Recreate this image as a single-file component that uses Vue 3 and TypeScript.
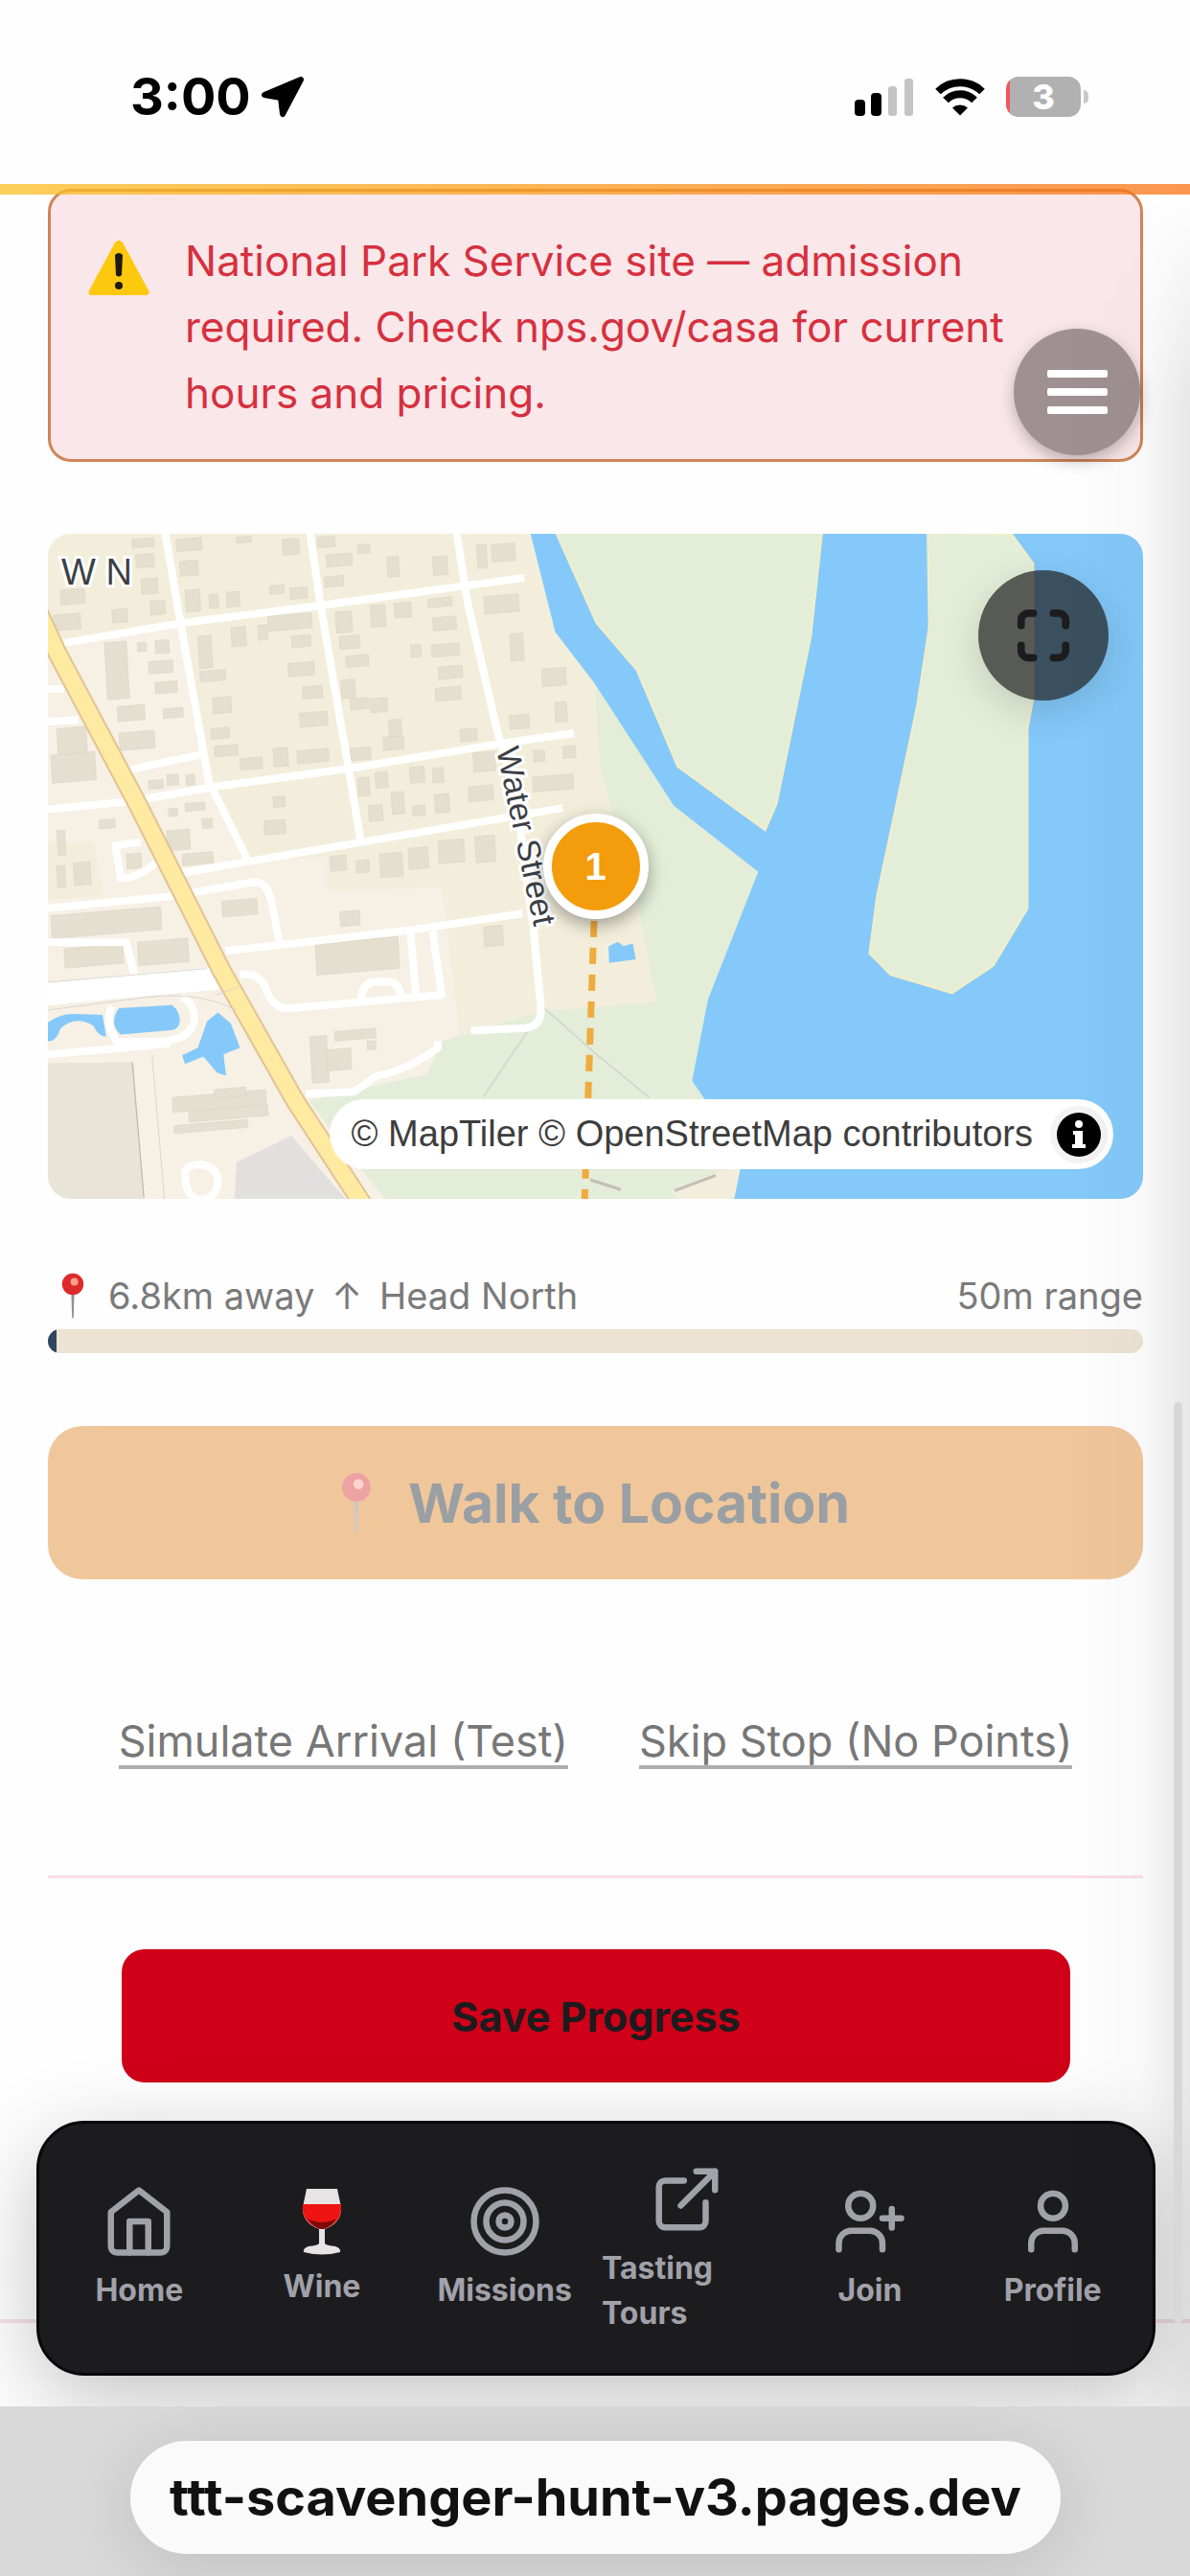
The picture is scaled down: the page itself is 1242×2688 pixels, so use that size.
<script setup lang="ts">
type Box = [x: number, y: number, w: number, h: number]

interface NavItem {
  label: string
  icon: 'home' | 'wine' | 'target' | 'external' | 'join' | 'user'
}

const navItems: NavItem[] = [
  { label: 'Home', icon: 'home' },
  { label: 'Wine', icon: 'wine' },
  { label: 'Missions', icon: 'target' },
  { label: 'Tasting Tours', icon: 'external' },
  { label: 'Join', icon: 'join' },
  { label: 'Profile', icon: 'user' },
]

const progressPercent = 0.8

// Building footprints of the old town, west of the river.
const buildings: Box[] = [
  [255, 50, 60, 20], [265, 85, 50, 30], [280, 140, 45, 35], [305, 190, 40, 32],
  [375, 50, 70, 28], [385, 100, 50, 34], [400, 165, 40, 50], [465, 175, 25, 32], [512, 170, 36, 34],
  [540, 45, 40, 14], [665, 50, 45, 36], [630, 155, 40, 20], [685, 160, 48, 26],
  [760, 45, 48, 24], [785, 85, 70, 28], [780, 135, 52, 24], [870, 62, 34, 20], [950, 90, 32, 46],
  [1075, 90, 40, 42], [1195, 62, 26, 54], [1235, 62, 64, 40],
  [60, 165, 66, 34], [40, 222, 74, 36], [200, 210, 42, 30], [180, 285, 60, 130],
  [270, 285, 24, 20], [318, 280, 38, 30], [300, 328, 66, 28], [318, 375, 60, 26], [340, 435, 54, 22],
  [215, 430, 74, 34], [220, 490, 96, 40], [50, 480, 80, 60], [34, 540, 120, 64],
  [435, 270, 36, 74], [440, 350, 70, 24], [475, 410, 50, 36], [470, 480, 50, 24], [480, 520, 64, 24], [550, 548, 60, 26],
  [525, 250, 40, 44], [598, 245, 26, 34], [625, 225, 120, 34], [690, 270, 52, 26], [680, 332, 72, 30],
  [720, 385, 54, 28], [712, 445, 76, 32], [640, 525, 40, 42], [705, 530, 86, 30],
  [810, 215, 44, 48], [820, 270, 56, 30], [838, 315, 62, 26], [825, 370, 38, 42], [850, 412, 50, 26], [905, 412, 46, 32],
  [905, 200, 40, 50], [970, 195, 46, 34], [955, 460, 34, 40], [940, 500, 56, 30], [850, 525, 56, 28],
  [1015, 290, 28, 28], [1062, 185, 66, 20], [1075, 228, 64, 30], [1072, 290, 76, 28], [1090, 340, 66, 28], [1082, 388, 70, 30],
  [1215, 180, 94, 40], [1285, 265, 36, 62], [1372, 345, 66, 40], [1408, 420, 32, 46], [1284, 450, 54, 32],
  [1150, 482, 46, 28], [1185, 535, 60, 44], [1172, 612, 68, 34], [1350, 530, 30, 26], [1430, 520, 34, 28], [1348, 590, 110, 34],
  [870, 592, 32, 42], [918, 580, 34, 36], [962, 625, 34, 50], [1012, 568, 40, 36], [1074, 570, 30, 34],
  [900, 655, 38, 36], [1020, 655, 34, 24], [1080, 630, 40, 42],
  [640, 635, 32, 24], [615, 690, 58, 32], [795, 770, 44, 34], [866, 780, 36, 28], [930, 765, 62, 54],
  [1008, 752, 54, 48], [1090, 735, 70, 52], [1190, 725, 54, 60], [1214, 930, 52, 46], [822, 896, 54, 34],
  [500, 872, 96, 36], [755, 968, 226, 72], [350, 585, 32, 24], [402, 585, 24, 24], [300, 598, 40, 20],
  [350, 712, 62, 46], [392, 765, 84, 26], [355, 662, 24, 18], [400, 650, 54, 18], [446, 685, 28, 22],
  [165, 688, 44, 20], [50, 712, 22, 56], [50, 792, 22, 50], [95, 785, 46, 52], [240, 765, 40, 34],
  [34, 905, 300, 52], [70, 980, 160, 44], [270, 965, 138, 54],
  [740, 1180, 46, 106], [786, 1210, 66, 48], [808, 1168, 112, 22], [896, 1190, 24, 20],
  [365, 1318, 256, 34], [410, 1350, 216, 24], [370, 1382, 200, 18], [480, 1300, 86, 20],
]
</script>

<template>
  <div class="page">
    <header class="status-bar">
      <div class="clock">
        <span class="time">3:00</span>
        <svg class="location" viewBox="0 0 46 44" aria-hidden="true">
          <path d="M42 4L23 40 21 23 4 20Z" />
        </svg>
      </div>
      <div class="indicators">
        <svg class="signal" viewBox="0 0 62 40" aria-hidden="true">
          <rect x="0" y="23" width="11" height="17" rx="4" />
          <rect x="17" y="16" width="11" height="24" rx="4" />
          <rect class="weak" x="35" y="9" width="9" height="31" rx="3" />
          <rect class="weak" x="52" y="1" width="9" height="39" rx="3" />
        </svg>
        <svg class="wifi" viewBox="0 0 52 40" aria-hidden="true">
          <path d="M3 14.500A33 33 0 0 1 49 14.500M11 23.500A21 21 0 0 1 41 23.500" />
          <path class="wifi-dot" d="M18 31.500A12 12 0 0 1 34 31.500L26 39.500Z" />
        </svg>
        <div class="battery"><span class="battery-body">3</span><span class="battery-tip"></span></div>
      </div>
    </header>

    <main class="content">
      <section class="alert" role="alert">
        <svg class="warning" viewBox="0 0 66 60" aria-hidden="true">
          <path d="M33 1Q36 1 38 5L64 53Q66 58 61 58H5Q0 58 2 53L28 5Q30 1 33 1Z" fill="#fdc90f" />
          <path d="M29 16Q33 12 37 16L36 37Q33 40 30 37Z" fill="#1d1a10" />
          <circle cx="33" cy="48" r="4" fill="#1d1a10" />
        </svg>
        <p>National Park Service site — admission required. Check nps.gov/casa for current hours and pricing.</p>
        <button class="menu" type="button" aria-label="Open menu">
          <span></span><span></span><span></span>
        </button>
      </section>

      <section class="map" aria-label="Map">
        <svg class="map-art" viewBox="0 0 1143 694" preserveAspectRatio="xMidYMid slice">
          <rect width="1143" height="694" fill="#f6f0e5" />
          <g transform="translate(-10 -17) scale(.3827 .4592)">
            <path fill="#f2eedb" d="M0 30H1340L1568 430 1700 640 1700 1120H1380L1150 1180 1100 840 790 850V770L570 780 480 630 440 500 390 250 70 290 0 190ZM0 740H150L180 860 0 870Z" />
            <path fill="#e8e4d8" d="M0 1240L260 1238 290 1560H0Z" />
            <path d="M256 1238L288 1545" stroke="#bdb8ac" stroke-width="3" />
            <path fill="#e2e0df" d="M540 1465L690 1405 850 1560H535Z" />
            <g fill="#e4dfcf" stroke="#d3cebf" stroke-width="1">
              <rect
                v-for="([x, y, w, h], i) in buildings"
                :key="i"
                :x="x"
                :y="y"
                :width="w"
                :height="h"
                :transform="`rotate(-4 ${x} ${y})`"
              />
            </g>
          </g>
          <g transform="translate(570 -17) scale(.3967 .4592)">
            <path fill="#e3edd7" d="M5 370V430L15 560 45 660 120 900 165 1100 0 1115-131 1120-400 1190-440 1265-750 1325-540 1560H330L385 1480 432 805 210 655Z" />
            <path fill="#f2eedb" d="M230 1560L205 1530 330 1485 400 1470 380 1560Z" />
            <path fill="#84c9f9" d="M-169 30L-102 260 0 375 210 655 432 805 300 1095 258 1280 290 1320 345 1400 385 1480 366 1560H1500V30Z" />
            <g fill="#e3edd7" stroke="#efeecb" stroke-width="6">
              <path d="M-102 30L7 240 112 345 220 565 450 710 480 650 570 270 600 30Z" />
              <path d="M878 30L882 250 850 430 745 860 725 990 780 1038 942 1080 1050 1018 1140 888V480L1155 410V105L1100 40Z" />
            </g>
            <path fill="#84c9f9" d="M38 975L62 964 78 974 102 968 110 1004 40 1012Z" />
            <path fill="none" stroke="#d5d6cf" stroke-width="4" d="M-131 1115L0 1215 145 1318M-165 1155L-290 1315" />
            <path fill="none" stroke="#c4bfb6" stroke-width="7" d="M-10 1505L70 1527M212 1530L320 1495" />
          </g>
          <g class="streets" transform="translate(-10 -17) scale(.3827 .4592)">
            <path d="M345 30L390 250 465 600 572 780M740 30L770 200 850 590 880 740M1140 30L1170 190 1250 480 1300 620 1350 930 1370 1110Q1375 1155 1330 1160L1180 1166" />
            <path d="M70 285L390 240 770 200 1325 137M0 665L250 645 480 612 850 570 1290 510 1460 490M240 575L445 538M0 465L110 460M0 390L70 390" />
            <path d="M390 808L570 782 880 738 1430 660M0 890L350 862 590 828Q625 830 635 870L660 975M510 985L1010 938 1320 900" />
            <path d="M550 1040Q600 1030 620 1070 640 1120 690 1115L1100 1085 1075 940M1015 945L1030 1085M880 1095Q885 1055 920 1055H960Q985 1060 990 1090" />
            <path d="M280 738L210 745 225 820Q270 820 320 785M0 965L240 965 265 1050M730 1310L860 1305Q890 1290 920 1270 1010 1255 1090 1205V1190" />
            <path d="M200 1110Q180 1150 215 1192L350 1190Q430 1180 425 1130 420 1100 390 1090M400 1500Q395 1470 440 1470 490 1475 490 1510 485 1550 440 1550 405 1545 400 1500Z" />
            <path class="avenue" d="M0 1085L240 1065 520 1045" />
            <path d="M0 1222L240 1205 360 1195" />
            <path class="casing" d="M0 215L50 305 270 650 500 1030 700 1325 900 1580" />
            <path class="highway" d="M0 215L50 305 270 650 500 1030 700 1325 900 1580" />
            <path class="bridge" d="M485 1085L550 1065M0 1058L460 1025M0 1122L250 1095Q430 1070 540 1120M310 1220L345 1560" />
          </g>
          <g transform="translate(-10 -17) scale(.3827 .4592)" fill="#84c9f9">
            <path d="M220 1115L365 1108Q390 1125 385 1150 380 1165 360 1165L225 1175Q190 1150 220 1115Z" />
            <path d="M0 1165Q50 1125 100 1128L175 1130 185 1180Q165 1180 150 1155 100 1130 60 1162 50 1190 30 1190H0Z" />
            <path d="M490 1125L525 1150 550 1205 505 1220 512 1268 488 1262 450 1225 400 1242 392 1222 435 1205 460 1145Z" />
          </g>
          <path class="route" d="M570 404L560 700" />
          <text class="map-label" x="14" y="53">W N</text>
          <text class="map-label street-name" transform="translate(468 225) rotate(78)">Water Street</text>
        </svg>
        <span class="marker">1</span>
        <button class="expand" type="button" aria-label="Expand map">
          <svg viewBox="0 0 24 24" aria-hidden="true">
            <path d="M8 3H6a3 3 0 0 0-3 3v2M16 3h2a3 3 0 0 1 3 3v2M21 16v2a3 3 0 0 1-3 3h-2M3 16v2a3 3 0 0 0 3 3h2" />
          </svg>
        </button>
        <div class="attribution">
          <span>© MapTiler © OpenStreetMap contributors</span>
          <button class="info" type="button" aria-label="Toggle attribution">
            <svg viewBox="0 0 60 60" aria-hidden="true">
              <circle cx="30" cy="30" r="30" fill="#f3f3f3" />
              <circle cx="30" cy="30" r="23" fill="#000" />
              <circle cx="30" cy="19" r="4" fill="#fff" />
              <path d="M24 26h10v14h3v4H23v-4h3v-10h-2z" fill="#fff" />
            </svg>
          </button>
        </div>
      </section>

      <section class="distance">
        <div class="distance-row">
          <span class="distance-text">
            <svg class="pin" viewBox="0 0 30 60" aria-hidden="true">
              <path d="M13 26h4l-1 32q-1 3-2 0z" fill="#8f8f95" />
              <circle cx="15" cy="15" r="14" fill="#dc2a2a" />
              <circle cx="17" cy="12" r="5" fill="#ff9d8f" />
            </svg>
            <span>6.8km away</span>
            <span>↑</span>
            <span>Head North</span>
          </span>
          <span>50m range</span>
        </div>
        <div class="track"><div class="fill" :style="{ width: progressPercent + '%' }"></div></div>
      </section>

      <button class="walk" type="button" disabled>
        <svg class="pin large" viewBox="0 0 30 60" aria-hidden="true">
          <path d="M13 26h4l-1 32q-1 3-2 0z" fill="#c9c9cc" />
          <circle cx="15" cy="15" r="14" fill="#eea3a3" />
          <circle cx="17" cy="12" r="5" fill="#fbd3cf" />
        </svg>
        Walk to Location
      </button>

      <div class="links">
        <a href="#simulate">Simulate Arrival (Test)</a>
        <a href="#skip">Skip Stop (No Points)</a>
      </div>

      <div class="save-area">
        <button class="save" type="button">Save Progress</button>
      </div>
    </main>

    <div class="dock">
      <nav class="nav">
        <a v-for="item in navItems" :key="item.label" class="nav-item" href="#">
          <svg v-if="item.icon === 'wine'" class="nav-wine" viewBox="0 0 44 70" aria-hidden="true">
            <path d="M6 1H38L42 20Q43 36 25 43V58Q26 60 36 61 42 63 41 67 22 72 3 67 2 63 8 61 18 60 19 58V43Q1 36 2 20Z" fill="#e6e4e4" />
            <path d="M2 17H42Q44 36 24 43H20Q0 36 2 17Z" fill="#ee1414" />
            <path d="M7 32Q22 40 37 32 32 40 24 43H20Q12 40 7 32Z" fill="#7c0a0a" />
          </svg>
          <svg v-else class="nav-icon" viewBox="0 0 24 24" aria-hidden="true">
            <template v-if="item.icon === 'home'">
              <path d="m3 9 9-7 9 7v11a2 2 0 0 1-2 2H5a2 2 0 0 1-2-2z" />
              <path d="M9 22V12h6v10" />
            </template>
            <template v-else-if="item.icon === 'target'">
              <circle cx="12" cy="12" r="10" />
              <circle cx="12" cy="12" r="6" />
              <circle cx="12" cy="12" r="2" />
            </template>
            <template v-else-if="item.icon === 'external'">
              <path d="M18 13v6a2 2 0 0 1-2 2H5a2 2 0 0 1-2-2V8a2 2 0 0 1 2-2h6" />
              <path d="M15 3h6v6M10 14 21 3" />
            </template>
            <template v-else-if="item.icon === 'join'">
              <path d="M16 21v-2a4 4 0 0 0-4-4H6a4 4 0 0 0-4 4v2" />
              <circle cx="9" cy="7" r="4" />
              <path d="M19 8v6M22 11h-6" />
            </template>
            <template v-else>
              <path d="M19 21v-2a4 4 0 0 0-4-4H9a4 4 0 0 0-4 4v2" />
              <circle cx="12" cy="7" r="4" />
            </template>
          </svg>
          <span class="nav-label">{{ item.label }}</span>
        </a>
      </nav>
    </div>

    <footer class="browser-bar">
      <div class="address">ttt-scavenger-hunt-v3.pages.dev</div>
    </footer>

    <div class="edge-shade"></div>
    <div class="scrollbar"></div>
  </div>
</template>

<style>
body {
  margin: 0;
  background: #fefefe;
}
</style>

<style scoped>
.page {
  position: relative;
  display: flex;
  flex-direction: column;
  min-height: 100vh;
  overflow: hidden;
  background: #fefefe;
  font-family: Inter, "Noto Sans", sans-serif;
}

button {
  margin: 0;
  padding: 0;
  border: 0;
  font-family: inherit;
}

.status-bar {
  position: relative;
  z-index: 2;
  box-sizing: border-box;
  height: 192px;
  padding: 10px 106px 0 136px;
  display: flex;
  align-items: center;
  justify-content: space-between;
}

.status-bar::after {
  content: "";
  position: absolute;
  left: 0;
  right: 0;
  top: 100%;
  height: 11px;
  background: linear-gradient(90deg, #fbbf24, #f97316);
  opacity: 0.75;
}

.clock,
.indicators,
.battery {
  display: flex;
  align-items: center;
}

.clock {
  gap: 10px;
}

.time {
  font-size: 54px;
  font-weight: 700;
  line-height: 60px;
}

.location {
  width: 46px;
  height: 44px;
  stroke: #000;
  stroke-width: 6px;
  stroke-linejoin: round;
}

.indicators {
  gap: 22px;
}

.signal {
  width: 62px;
  height: 40px;
}

.weak {
  fill: #c4c4c4;
}

.wifi {
  width: 52px;
  height: 40px;
  fill: none;
  stroke: #000;
  stroke-width: 8px;
}

.wifi .wifi-dot {
  fill: #000;
  stroke: none;
}

.battery {
  gap: 3px;
}

.battery-body {
  width: 78px;
  height: 42px;
  border-radius: 13px;
  background: linear-gradient(90deg, #f4565a 4px, #b1b1b1 4px);
  color: #fff;
  font-size: 36px;
  font-weight: 800;
  line-height: 42px;
  text-align: center;
}

.battery-tip {
  width: 5px;
  height: 14px;
  border-radius: 0 5px 5px 0;
  background: #c9c9c9;
}

.content {
  padding: 5px 49px 0 50px;
}

.alert {
  position: relative;
  display: flex;
  align-items: flex-start;
  gap: 36px;
  padding: 38px 100px 34px 38px;
  border: 3px solid #d08558;
  border-radius: 24px;
  background: #fae7e9;
}

.warning {
  flex: none;
  width: 66px;
  height: 60px;
  margin-top: 12px;
}

.alert p {
  margin: 0;
  color: #d6303f;
  font-size: 44px;
  line-height: 69px;
}

.menu {
  position: absolute;
  right: 0;
  bottom: 4px;
  display: flex;
  flex-direction: column;
  align-items: center;
  justify-content: center;
  gap: 11px;
  width: 132px;
  height: 132px;
  border-radius: 50%;
  background: #9f9192;
  box-shadow: 0 6px 16px rgba(0, 0, 0, 0.25);
}

.menu span {
  width: 63px;
  height: 8px;
  border-radius: 2px;
  background: #fff;
}

.map {
  position: relative;
  margin-top: 75px;
  border-radius: 24px;
  overflow: hidden;
}

.map-art {
  display: block;
  width: 100%;
  aspect-ratio: 1143 / 694;
}

.streets path {
  fill: none;
  stroke: #fff;
  stroke-width: 8px;
  stroke-linejoin: round;
  vector-effect: non-scaling-stroke;
}

.streets .avenue {
  stroke-width: 24px;
}

.streets .casing {
  stroke: #e3c295;
  stroke-width: 21px;
}

.streets .highway {
  stroke: #feeaa1;
  stroke-width: 17px;
}

.streets .bridge {
  stroke: #d9d6cf;
  stroke-width: 1px;
}

.route {
  fill: none;
  stroke: #f0ab3e;
  stroke-width: 7px;
  stroke-dasharray: 17 11;
}

.map-label {
  fill: #3c3f46;
  stroke: #fff;
  stroke-width: 6px;
  paint-order: stroke;
  font-family: "Liberation Sans", Arial, sans-serif;
  font-size: 38px;
}

.street-name {
  font-size: 34px;
}

.marker {
  position: absolute;
  left: 50%;
  top: 50%;
  display: flex;
  align-items: center;
  justify-content: center;
  width: 92px;
  height: 92px;
  border: 9px solid #fff;
  border-radius: 50%;
  transform: translate(-50%, -50%);
  background: #f39c0c;
  box-shadow: 0 6px 18px rgba(0, 0, 0, 0.35);
  color: #fff;
  font-family: "Liberation Sans", Arial, sans-serif;
  font-size: 40px;
  font-weight: 700;
}

.expand {
  position: absolute;
  top: 38px;
  right: 36px;
  display: flex;
  align-items: center;
  justify-content: center;
  width: 136px;
  height: 136px;
  border-radius: 50%;
  background: rgba(28, 28, 30, 0.7);
  box-shadow: 0 12px 40px rgba(0, 0, 0, 0.14);
}

.expand svg {
  width: 62px;
  height: 62px;
  fill: none;
  stroke: #1c1c1e;
  stroke-width: 3px;
  stroke-linecap: round;
}

.attribution {
  position: absolute;
  right: 31px;
  bottom: 31px;
  display: flex;
  align-items: center;
  gap: 18px;
  height: 73px;
  padding: 0 6px 0 23px;
  border-radius: 37px;
  background: #fff;
  color: #3d3d3d;
  font-family: "Liberation Sans", Arial, sans-serif;
  font-size: 38px;
  white-space: nowrap;
}

.info {
  width: 60px;
  height: 60px;
  background: none;
}

.info svg {
  display: block;
}

.distance {
  margin-top: 72px;
}

.distance-row {
  display: flex;
  align-items: center;
  justify-content: space-between;
  margin-bottom: 6px;
  color: #7a7a7a;
  font-size: 38px;
  line-height: 58px;
}

.distance-text {
  display: flex;
  align-items: center;
  gap: 18px;
  padding-left: 13px;
}

.pin {
  width: 26px;
  height: 48px;
  margin-right: 6px;
}

.pin.large {
  width: 32px;
  height: 64px;
}

.track {
  height: 25px;
  border-radius: 13px;
  overflow: hidden;
  background: #ece3d2;
}

.fill {
  height: 100%;
  background: #2f4560;
}

.walk {
  display: flex;
  align-items: center;
  justify-content: center;
  gap: 32px;
  width: 100%;
  height: 160px;
  margin-top: 76px;
  border-radius: 36px;
  background: #f0c79b;
  color: #9a9fa3;
  font-size: 57px;
  font-weight: 700;
}

.links {
  display: flex;
  justify-content: center;
  gap: 74px;
  margin-top: 144px;
  padding-bottom: 111px;
  border-bottom: 3px solid #f8dfe3;
}

.links a {
  border-bottom: 4px solid #adadad;
  color: #777;
  font-size: 45px;
  line-height: 50px;
  text-decoration: none;
  white-space: nowrap;
}

.save-area {
  padding: 74px 76px 0 77px;
}

.save {
  display: block;
  width: 100%;
  height: 139px;
  border-radius: 24px;
  background: #cf0018;
  color: #1c1c1e;
  font-size: 43px;
  font-weight: 700;
}

.dock {
  position: relative;
  padding: 40px 36px 32px 38px;
}

.dock::before {
  content: "";
  position: absolute;
  left: 0;
  right: 0;
  bottom: 87px;
  height: 4px;
  background: #f8e2e5;
}

.nav {
  position: relative;
  display: grid;
  grid-template-columns: repeat(6, minmax(0, 1fr));
  box-sizing: border-box;
  min-height: 266px;
  padding: 30px 9px;
  border: 3px solid #08080a;
  border-radius: 50px;
  background: #1c1c1e;
  box-shadow: 0 24px 90px rgba(0, 0, 0, 0.24);
}

.nav-item {
  display: flex;
  flex-direction: column;
  align-items: center;
  justify-content: center;
  gap: 9px;
  padding: 0 6px;
  color: #a1a1aa;
  text-decoration: none;
}

.nav-icon {
  width: 78px;
  height: 78px;
  fill: none;
  stroke: currentColor;
  stroke-width: 2px;
  stroke-linecap: round;
  stroke-linejoin: round;
}

.nav-wine {
  width: 44px;
  height: 70px;
}

.nav-label {
  font-size: 32px;
  font-weight: 700;
  line-height: 47px;
}

.browser-bar {
  position: relative;
  z-index: 1;
  flex: 1;
  padding: 36px 135px 23px 136px;
  background: #d9d9d9;
}

.address {
  height: 118px;
  border-radius: 59px;
  background: #fafafb;
  box-shadow: 0 12px 70px rgba(0, 0, 0, 0.12);
  color: #111;
  font-size: 54px;
  font-weight: 700;
  line-height: 118px;
  text-align: center;
}

.edge-shade {
  position: absolute;
  top: 204px;
  right: 0;
  bottom: 177px;
  width: 130px;
  background: linear-gradient(90deg, transparent, rgba(0, 0, 0, 0.02) 60%, rgba(0, 0, 0, 0.09));
  mask-image: linear-gradient(transparent, #000 220px);
  pointer-events: none;
}

.scrollbar {
  position: absolute;
  top: 1463px;
  right: 8px;
  bottom: 264px;
  width: 9px;
  border-radius: 5px;
  background: #d8d8d8;
}
</style>
